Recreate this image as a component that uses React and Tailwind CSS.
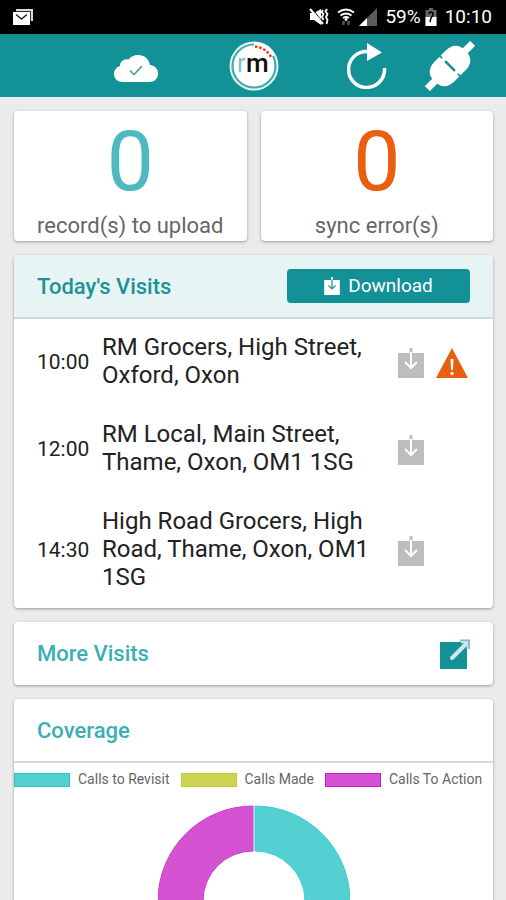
import React from 'react';

const visits = [
  { time: '10:00', place: 'RM Grocers, High Street, Oxford, Oxon', warning: true },
  { time: '12:00', place: 'RM Local, Main Street, Thame, Oxon, OM1 1SG' },
  { time: '14:30', place: 'High Road Grocers, High Road, Thame, Oxon, OM1 1SG' },
];

const legend = [
  { label: 'Calls to Revisit', swatch: 'bg-[#55d0d2] border-[#25c5c8]' },
  { label: 'Calls Made', swatch: 'bg-[#cdd455] border-[#c2cb27]' },
  { label: 'Calls To Action', swatch: 'bg-[#d553d2] border-[#c71fc4]' },
];

const MailIcon = () => (
  <svg className="w-[22px] h-[18px]" viewBox="0 0 22 18">
    <path d="M4 4V1h17v12h-3" fill="#d8d8d8" />
    <path d="M3.500 3.500h15V13" fill="none" stroke="#000" strokeWidth=".8" />
    <rect x="1" y="4" width="17" height="13" fill="#fff" />
    <path d="M4 6.500l5.500 4.500L15 6.500" fill="none" stroke="#222" strokeWidth="1.500" />
  </svg>
);

const MuteIcon = () => (
  <svg className="w-5 h-[18px]" viewBox="0 0 20 18">
    <path d="M1 5h4l7-4v16l-7-5H1z" fill="#fff" />
    <path d="M2.500 0l12 15" stroke="#000" strokeWidth="1" />
    <path d="M1 1l13 15" stroke="#fff" strokeWidth="2" />
    <path d="M14 2l-1.500 2L14.500 6 13 9l1.500 3M18 1l-1.500 2.500L18.500 6 17 9l1.500 3-1 4" fill="none" stroke="#fff" strokeWidth="1.800" />
  </svg>
);

const WifiIcon = () => (
  <svg className="w-[18px] h-[18px]" viewBox="0 0 18 18">
    <path d="M1 4.500q8-6 16 0M3.500 7.500q5.500-4 11 0M6 10q3-2 6 0" fill="none" stroke="#fff" strokeWidth="1.800" />
    <circle cx="9" cy="11.500" r="1.400" fill="#fff" />
    <path d="M6.500 17v-4M11.500 13v4" fill="none" stroke="#555" strokeWidth="2.500" />
  </svg>
);

const SignalIcon = () => (
  <svg className="w-[18px] h-[18px]" viewBox="0 0 18 18">
    <path d="M0 18L18 0v18z" fill="#5c5c5c" />
    <path d="M0 18l8-8v8z" fill="#fff" />
  </svg>
);

const BatteryIcon = () => (
  <svg className="w-3 h-[18px]" viewBox="0 0 12 18">
    <path d="M4 0h4v2h3.500v16H.5V2H4z" fill="#666" />
    <path d="M.5 9h11v9H.5z" fill="#fff" />
    <path d="M4 6q0-2 2-2t2 2q0 2-2 4l-1 4" fill="none" stroke="#000" strokeWidth="1.500" />
  </svg>
);

const CloudIcon = () => (
  <svg className="w-[46px] h-7" viewBox="0 0 46 28">
    <path d="M10 28C4.500 28 1 24.500 1 20c0-4 2.500-7 6-8 0-4.500 4-7.500 8.500-6.500C17.500 2.500 21 1 25 1c6.500 0 11 4 12 10 5 .5 8 4 8 8.500 0 5-3.500 8.500-9 8.500z" fill="#fff" />
    <path d="M17 16.500l4 4L29 12" fill="none" stroke="#4f9f92" strokeWidth="1.600" />
  </svg>
);

const LogoIcon = () => (
  <svg className="w-[50px] h-[50px]" viewBox="0 0 50 50">
    <circle cx="25" cy="25" r="24.500" fill="#e9f6f6" />
    <circle cx="25" cy="25" r="21.500" fill="#fff" stroke="#3fafb3" strokeWidth="2.200" />
    <path d="M25 3.500a21.500 21.500 0 0 1 19 11.500" fill="none" stroke="#fff" strokeWidth="5" />
    <path d="M26 5.500a20 20 0 0 1 16 10.500" fill="none" stroke="#e23d24" strokeWidth="2.500" strokeDasharray="2.500 1.800" />
    <text x="8" y="31" fontFamily="Roboto, sans-serif" fontSize="25" fill="#7cc7c9">r</text>
    <text x="17" y="31" fontFamily="Roboto, sans-serif" fontSize="26" fontWeight="500" fill="#111">m</text>
  </svg>
);

const RefreshIcon = () => (
  <svg className="w-10 h-[46px]" viewBox="0 0 40 46">
    <path d="M21 8.500A18 18 0 1 0 37.500 25" fill="none" stroke="#fff" strokeWidth="3.500" />
    <path d="M20 0l15 9.500L20 18z" fill="#fff" />
  </svg>
);

const PlugIcon = () => (
  <svg className="w-[50px] h-[50px]" viewBox="0 0 50 50">
    <g transform="rotate(45 25 25)" fill="#fff">
      <rect x="21.500" y="-7" width="7" height="14" />
      <rect x="21.500" y="43" width="7" height="14" />
      <path d="M11 24.200V17C11 8 16 3 25 3s14 5 14 14v7.200z" />
      <path d="M11 25.800V33c0 9 5 14 14 14s14-5 14-14v-7.200z" />
      <path d="M18 25h14" stroke="#129197" strokeWidth="2.500" />
      <rect x="14" y="23" width="4" height="4" />
      <rect x="32" y="23" width="4" height="4" />
    </g>
  </svg>
);

const DownloadBox = ({ className, arrow }) => (
  <svg className={className} viewBox="0 0 26 30">
    <rect x="0" y="5" width="26" height="25" fill="currentColor" />
    <path d="M13 0v5" stroke="currentColor" strokeWidth="3" />
    <path d="M13 4v16M7 14l6 6 6-6" fill="none" stroke={arrow} strokeWidth="2" />
  </svg>
);

const WarningIcon = () => (
  <svg className="w-8 h-[30px]" viewBox="0 0 32 30">
    <path d="M16 0l16 30H0z" fill="#e8600f" />
    <path d="M14.500 11h3l-.6 11h-1.800z" fill="#fff" />
    <circle cx="16" cy="25.500" r="1.700" fill="#fff" />
  </svg>
);

const OpenIcon = () => (
  <svg className="w-[30px] h-[30px]" viewBox="0 0 30 30">
    <rect x="0" y="3" width="27" height="27" fill="#129197" />
    <path d="M12 19L26 5" stroke="#cfe6ee" strokeWidth="4" strokeLinecap="round" />
    <path d="M20 1.500h9V10" fill="none" stroke="#7dbcc4" strokeWidth="2" />
    <path d="M21 3.500h6.500V10" fill="none" stroke="#cfe6ee" strokeWidth="1.500" />
  </svg>
);

const Donut = () => (
  <svg className="w-48 h-48" viewBox="0 0 192 192">
    <path d="M97 1a95 95 0 0 1 0 190v-45a50 50 0 0 0 0-100z" fill="#55d0d2" stroke="#3bcbcd" strokeWidth="1" />
    <path d="M95 1a95 95 0 0 0 0 190v-45a50 50 0 0 1 0-100z" fill="#d553d2" stroke="#c93cc7" strokeWidth="1" />
  </svg>
);

const Card = ({ className, children }) => (
  <section className={`bg-white rounded-sm shadow-[0_1px_3px_rgba(0,0,0,0.35)] ${className || ''}`}>{children}</section>
);

const Counter = ({ value, label, color }) => (
  <Card className="flex-1 h-[130px] pt-0.5 flex flex-col items-center">
    <span className={`text-[84px] leading-[98px] ${color}`}>{value}</span>
    <span className="text-[22px] leading-[30px] text-[#666]">{label}</span>
  </Card>
);

const App = () => {
  return (
    <div className="h-screen overflow-hidden bg-[#ebebeb] font-['Roboto',sans-serif]">
      <div className="h-[34px] bg-black text-white flex items-center justify-between pl-3 pr-[14px]">
        <MailIcon />
        <div className="flex items-center">
          <MuteIcon />
          <span className="ml-2"><WifiIcon /></span>
          <span className="ml-1"><SignalIcon /></span>
          <span className="ml-2 text-[19px]">59%</span>
          <span className="ml-1"><BatteryIcon /></span>
          <span className="ml-2 text-[19px]">10:10</span>
        </div>
      </div>

      <header className="h-[63px] bg-[#129197] flex items-center justify-end pr-[31px]">
        <button type="button" aria-label="Upload status" className="mr-[70px] mt-1"><CloudIcon /></button>
        <LogoIcon />
        <button type="button" aria-label="Refresh" className="ml-[68px]"><RefreshIcon /></button>
        <button type="button" aria-label="Connection" className="ml-[38px]"><PlugIcon /></button>
      </header>

      <main className="flex flex-col gap-[14px] pl-[14px] pr-[13px] pt-[14px]">
        <div className="flex gap-[14px]">
          <Counter value="0" label="record(s) to upload" color="text-[#4fb9c0]" />
          <Counter value="0" label="sync error(s)" color="text-[#e8600f]" />
        </div>

        <Card>
          <div className="h-16 px-[23px] flex items-center justify-between bg-[#e6f5f4] border-b-2 border-[#cfd6d6] rounded-t-sm">
            <h2 className="text-[22px] font-medium text-[#1f9297]">Today's Visits</h2>
            <button type="button" className="w-[183px] h-[34px] rounded bg-[#129197] text-white text-[19px] flex items-center justify-center gap-2">
              <DownloadBox className="w-4 h-[18px]" arrow="#129197" />
              Download
            </button>
          </div>
          <ul className="px-[23px] pt-[14px] pb-[17px] flex flex-col gap-[31px]">
            {visits.map((visit) => (
              <li key={visit.time} className="flex items-center">
                <span className="w-[65px] mt-1 text-[21px] text-[#222]">{visit.time}</span>
                <span className="w-[280px] text-2xl leading-7 text-[#222]">{visit.place}</span>
                <span className="ml-4 mt-1 flex items-center gap-3">
                  <DownloadBox className="w-[26px] h-[30px] text-[#bdbdbd]" arrow="#fff" />
                  {visit.warning ? <WarningIcon /> : null}
                </span>
              </li>
            ))}
          </ul>
        </Card>

        <Card className="h-[63px] px-[23px] flex items-center justify-between">
          <h2 className="text-[22px] font-medium text-[#3aafb5]">More Visits</h2>
          <button type="button" aria-label="Open more visits"><OpenIcon /></button>
        </Card>

        <Card>
          <div className="h-16 px-[23px] flex items-center border-b-2 border-[#d9d9d9]">
            <h2 className="text-[22px] font-medium text-[#3aafb5]">Coverage</h2>
          </div>
          <div className="mt-2 flex">
            {legend.map((item) => (
              <div key={item.label} className="flex items-center mr-[11px] whitespace-nowrap">
                <span className={`w-14 h-[14px] mt-0.5 mr-2 border ${item.swatch}`}></span>
                <span className="text-sm leading-4 text-[#666]">{item.label}</span>
              </div>
            ))}
          </div>
          <div className="mt-[18px] flex justify-center">
            <Donut />
          </div>
        </Card>
      </main>
    </div>
  );
};

export default App;
